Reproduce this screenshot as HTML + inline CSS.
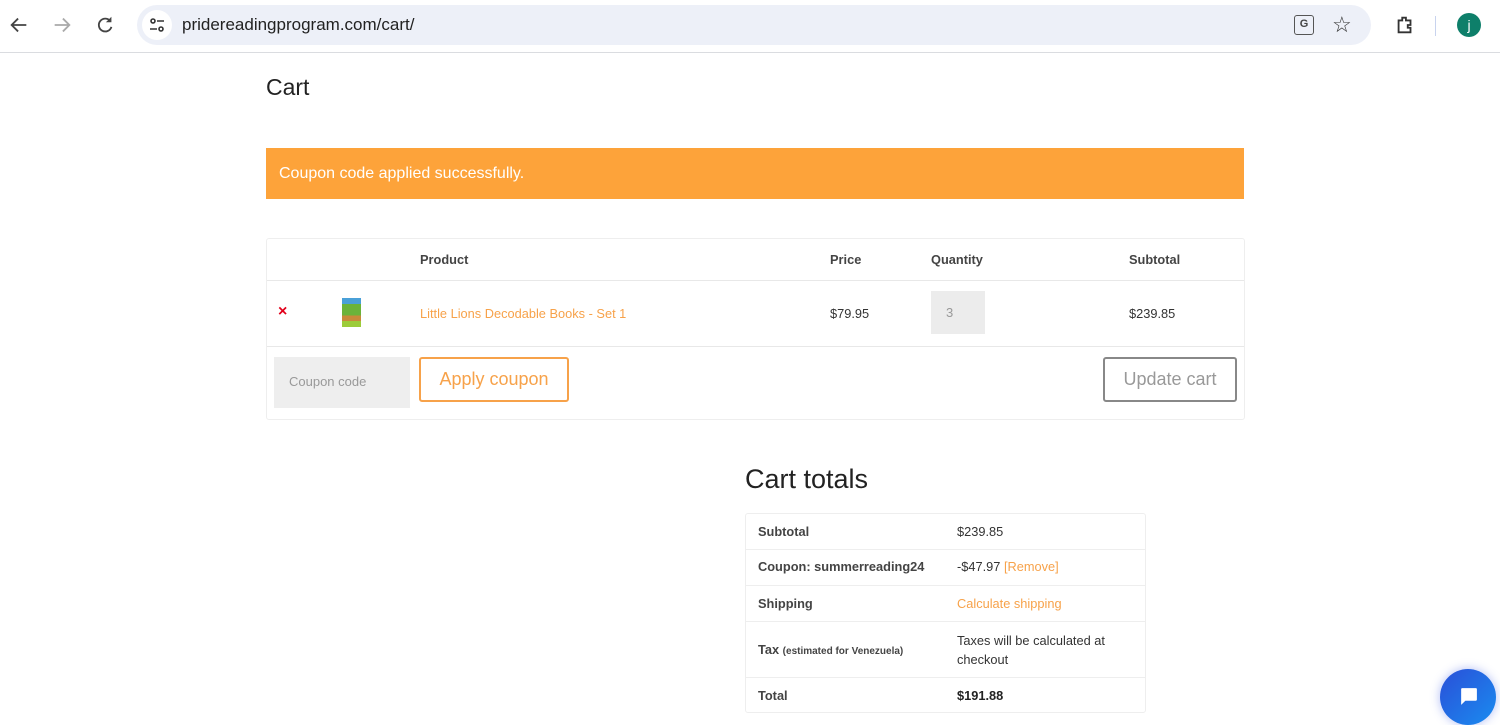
<!DOCTYPE html>
<html><head><meta charset="utf-8"><style>
*{box-sizing:border-box;margin:0;padding:0}
body{width:1500px;height:723px;overflow:hidden;background:#fff;font-family:"Liberation Sans",Arial,sans-serif;position:relative;color:#333}
.a{position:absolute}
.bar{left:0;top:0;width:1500px;height:53px;background:#fff;border-bottom:1px solid #dadce0}
.url{left:137px;top:5px;width:1234px;height:40px;background:#edf0f8;border-radius:20px}
.t{font-size:12.8px}
.b{font-weight:bold;color:#444}
.or{color:#f7a24a}
</style></head><body>
<div class="a bar"></div>
<div class="a url"></div>
<svg class="a" style="left:8px;top:14px" width="22" height="22" viewBox="0 0 24 24"><path d="M20 12H5M11 5l-7 7 7 7" stroke="#444" stroke-width="2" fill="none"/></svg>
<svg class="a" style="left:51px;top:14px" width="22" height="22" viewBox="0 0 24 24"><path d="M4 12h15M13 5l7 7-7 7" stroke="#aaa" stroke-width="2" fill="none"/></svg>
<svg class="a" style="left:94px;top:14px" width="22" height="22" viewBox="0 0 24 24"><path d="M18 8A7 7 0 1 0 19 14" stroke="#444" stroke-width="2" fill="none"/><path d="M19 3v6h-6" fill="#444"/></svg>
<div class="a" style="left:142px;top:10px;width:30px;height:30px;border-radius:15px;background:#fff"></div>
<svg class="a" style="left:148px;top:16px" width="18" height="18" viewBox="0 0 18 18"><circle cx="5" cy="5" r="2" fill="none" stroke="#333" stroke-width="1.6"/><path d="M9 5h7M2 13h7" stroke="#333" stroke-width="1.6"/><circle cx="13" cy="13" r="2" fill="none" stroke="#333" stroke-width="1.6"/></svg>
<div class="a" style="left:182px;top:15px;font-size:17px;color:#222">pridereadingprogram.com/cart/</div>
<div class="a" style="left:1294px;top:15px;width:20px;height:20px;border:1.5px solid #555;border-radius:3px;font-size:11px;font-weight:bold;text-align:center;line-height:17px;color:#444">G</div>
<div class="a" style="left:1332px;top:12px;font-size:22px;color:#333">☆</div>
<svg class="a" style="left:1394px;top:14px" width="22" height="22" viewBox="0 0 24 24"><path d="M5 7h4V4h4v3h5v5h-3v3h3v5H5z" stroke="#333" stroke-width="2" fill="none"/></svg>
<div class="a" style="left:1435px;top:16px;width:1px;height:20px;background:#c8d3ee"></div>
<div class="a" style="left:1457px;top:13px;width:24px;height:24px;border-radius:12px;background:#0e7f6a;color:#fff;font-size:14px;text-align:center;line-height:24px">j</div>

<div class="a" style="left:266px;top:74px;font-size:23px;color:#222">Cart</div>
<div class="a" style="left:266px;top:148px;width:978px;height:51px;background:#fda33a;color:#fff;font-size:16px;padding:17px 13px">Coupon code applied successfully.</div>

<div class="a" style="left:266px;top:238px;width:979px;height:182px;border:1px solid #eee;border-radius:3px"></div>
<div class="a" style="left:267px;top:280px;width:977px;height:1px;background:#e8e8e8"></div>
<div class="a" style="left:267px;top:346px;width:977px;height:1px;background:#e8e8e8"></div>
<div class="a t b" style="left:420px;top:252px">Product</div>
<div class="a t b" style="left:830px;top:252px">Price</div>
<div class="a t b" style="left:931px;top:252px">Quantity</div>
<div class="a t b" style="left:1129px;top:252px">Subtotal</div>
<div class="a" style="left:278px;top:303px;color:#e2001a;font-weight:bold;font-size:16px">×</div>
<div class="a" style="left:342px;top:298px;width:19px;height:29px;background:linear-gradient(#4aa0d8 0 20%,#6bb33a 20% 60%,#c88a3a 60% 80%,#9ccc3a 80%)"></div>
<div class="a t or" style="left:420px;top:306px">Little Lions Decodable Books - Set 1</div>
<div class="a t" style="left:830px;top:306px">$79.95</div>
<div class="a" style="left:931px;top:291px;width:54px;height:43px;background:#ececec;color:#999;font-size:13px;padding-top:14px;padding-left:15px">3</div>
<div class="a t" style="left:1129px;top:306px">$239.85</div>
<div class="a" style="left:274px;top:357px;width:136px;height:51px;background:#eee;color:#999;font-size:13px;padding:17px 15px">Coupon code</div>
<div class="a or" style="left:419px;top:357px;width:150px;height:45px;border:2px solid #f7a24a;border-radius:3px;font-size:18px;text-align:center;line-height:41px">Apply coupon</div>
<div class="a" style="left:1103px;top:357px;width:134px;height:45px;border:2px solid #888;border-radius:3px;font-size:18px;text-align:center;line-height:41px;color:#999">Update cart</div>

<div class="a" style="left:745px;top:464px;font-size:27px;color:#222">Cart totals</div>
<div class="a" style="left:745px;top:513px;width:401px;height:200px;border:1px solid #eee;border-radius:3px"></div>
<div class="a" style="left:746px;top:549px;width:399px;height:1px;background:#eee"></div>
<div class="a" style="left:746px;top:585px;width:399px;height:1px;background:#eee"></div>
<div class="a" style="left:746px;top:621px;width:399px;height:1px;background:#eee"></div>
<div class="a" style="left:746px;top:677px;width:399px;height:1px;background:#eee"></div>
<div class="a t b" style="left:758px;top:524px">Subtotal</div>
<div class="a t" style="left:957px;top:524px">$239.85</div>
<div class="a t b" style="left:758px;top:559px">Coupon: summerreading24</div>
<div class="a t" style="left:957px;top:559px">-$47.97 <span class="or">[Remove]</span></div>
<div class="a t b" style="left:758px;top:596px">Shipping</div>
<div class="a t or" style="left:957px;top:596px">Calculate shipping</div>
<div class="a t b" style="left:758px;top:642px">Tax <span style="font-size:10px">(estimated for Venezuela)</span></div>
<div class="a t" style="left:957px;top:631px;line-height:19px;width:165px">Taxes will be calculated at checkout</div>
<div class="a t b" style="left:758px;top:688px">Total</div>
<div class="a t" style="left:957px;top:688px;font-weight:bold;color:#222">$191.88</div>

<div class="a" style="left:1440px;top:669px;width:56px;height:56px;border-radius:28px;background:linear-gradient(135deg,#2a4fd8,#1a8cf0);box-shadow:0 0 10px rgba(60,90,230,.4)"></div>
<svg class="a" style="left:1458px;top:686px" width="21" height="21" viewBox="0 0 20 20"><path d="M3 2h14a1 1 0 0 1 1 1v10a1 1 0 0 1-1 1H7l-4 4V3a1 1 0 0 1 1-1z" fill="#fff"/></svg>
</body></html>
